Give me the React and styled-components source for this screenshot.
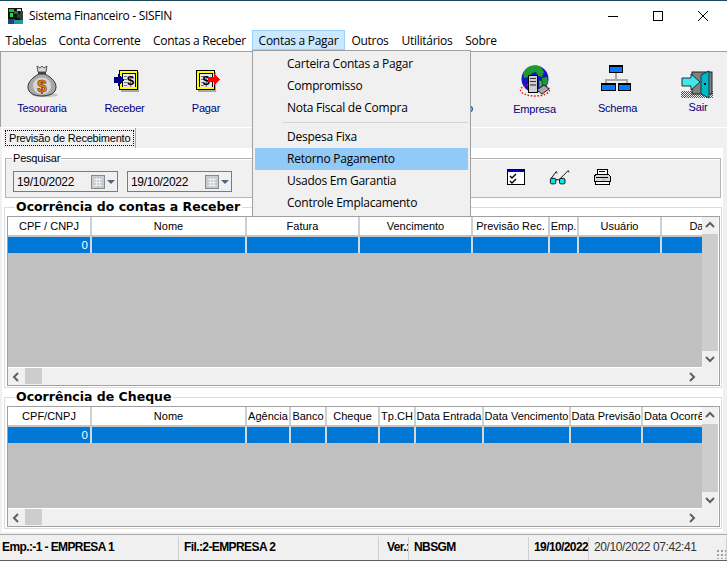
import styled, { createGlobalStyle } from "styled-components";

const GlobalStyle = createGlobalStyle`
	html, body {
		margin: 0;
		padding: 0;
		background: #f0f0f0;
	}
	* {
		box-sizing: border-box;
	}
`;

const uiFont = `"Open Sans", "Noto Sans", sans-serif`;
const oldFont = `"Liberation Sans", Arial, sans-serif`;

const menus = [
	["Tabelas", 52],
	["Conta Corrente", 95],
	["Contas a Receber", 105],
	["Contas a Pagar", 93],
	["Outros", 50],
	["Utilitários", 64],
	["Sobre", 44],
];

const receberCols = [
	["CPF / CNPJ", 84],
	["Nome", 155],
	["Fatura", 113],
	["Vencimento", 113],
	["Previsão Rec.", 77],
	["Emp.", 29],
	["Usuário", 83],
	["Data", 80],
];

const chequeCols = [
	["CPF/CNPJ", 84],
	["Nome", 155],
	["Agência", 44],
	["Banco", 36],
	["Cheque", 53],
	["Tp.CH", 36],
	["Data Entrada", 68],
	["Data Vencimento", 87],
	["Data Previsão", 72],
	["Data Ocorrência", 84],
];

const AppIcon = () => (
	<svg width="16" height="16" viewBox="0 0 16 16" shapeRendering="crispEdges">
		<rect x="0" y="0" width="14" height="12" fill="#101010" />
		<rect x="1" y="1" width="5" height="3" fill="#19c337" />
		<rect x="6" y="3" width="4" height="3" fill="#0d7a20" />
		<rect x="2" y="5" width="3" height="4" fill="#1be04a" />
		<rect x="9" y="1" width="4" height="2" fill="#d8d8d8" />
		<rect x="9" y="6" width="4" height="4" fill="#0a5a18" />
		<rect x="0" y="11" width="7" height="5" fill="#1d3f8f" />
		<rect x="6" y="12" width="9" height="4" fill="#1c9b9b" />
		<rect x="12" y="3" width="3" height="9" fill="#3a3a3a" />
	</svg>
);

const BagIcon = () => (
	<svg width="36" height="36" viewBox="0 0 36 36">
		<ellipse cx="21" cy="31" rx="13" ry="2" fill="#c4c8b4" />
		<path d="M13 2l3 2 2-2 2 2 3-2-1 6h-8z" fill="#d8d8d8" stroke="#555" strokeWidth="1" />
		<rect x="14" y="8" width="8" height="2" fill="#444" />
		<path d="M15 10C7 14 4 19 4 23c0 6 6 9 14 9s14-3 14-9c0-4-3-9-11-13z" fill="#a8a8a8" stroke="#333" strokeWidth="1" />
		<ellipse cx="18" cy="22" rx="9" ry="8.5" fill="#d4d8d2" />
		<text x="18" y="28" textAnchor="middle" fontFamily="Liberation Sans" fontWeight="700" fontSize="17" fill="#d89a00" stroke="#902000" strokeWidth="0.6">$</text>
	</svg>
);

const BillFrame = ({ x }) => (
	<g shapeRendering="crispEdges">
		<rect x={x + 2} y="8" width="18" height="20" fill="#a8a8a8" />
		<rect x={x} y="6" width="19" height="20" fill="#000" />
		<rect x={x + 1} y="7" width="17" height="18" fill="#ffff00" />
		<rect x={x + 3} y="9" width="14" height="14" fill="#000" />
		<rect x={x + 4} y="10" width="12" height="13" fill="#e8e8e8" />
		<rect x={x + 5} y="12" width="3" height="1" fill="#777" />
		<rect x={x + 5} y="15" width="3" height="1" fill="#777" />
		<rect x={x + 5} y="18" width="3" height="1" fill="#777" />
		<rect x={x + 5} y="21" width="3" height="1" fill="#777" />
	</g>
);

const ReceberIcon = () => (
	<svg width="36" height="36" viewBox="0 0 36 36">
		<BillFrame x={12} />
		<text x="23.5" y="21" textAnchor="middle" fontFamily="Liberation Sans" fontWeight="700" fontSize="13" fill="#000">$</text>
		<path d="M7 13h4v-3l6 6-6 6v-3H7z" fill="#000080" shapeRendering="crispEdges" />
	</svg>
);

const PagarIcon = () => (
	<svg width="36" height="36" viewBox="0 0 36 36">
		<BillFrame x={8} />
		<text x="18" y="21" textAnchor="middle" fontFamily="Liberation Sans" fontWeight="700" fontSize="13" fill="#000">$</text>
		<path d="M20 13h6v-4l6 6.5-6 6.5v-4h-6z" fill="#ff0000" shapeRendering="crispEdges" />
	</svg>
);

const GlobeIcon = () => (
	<svg width="36" height="36" viewBox="0 0 36 36">
		<circle cx="18" cy="15" r="13.5" fill="#1414c8" />
		<path d="M10 4c4-3 10-3 14-1l3 5-2 5-4-1-2-4-4 1-3 4-5 1-1-5z" fill="#1f9a2c" />
		<path d="M25 14l5-1 1 5-4 6-2-4z" fill="#1f9a2c" />
		<ellipse cx="18" cy="26" rx="14.5" ry="6" fill="none" stroke="#e01010" strokeWidth="1.4" strokeDasharray="1.6 1.6" />
		<g shapeRendering="crispEdges">
			<rect x="11" y="11" width="10" height="18" fill="#000" />
			<rect x="12" y="12" width="8" height="16" fill="#d0d0d0" />
			<rect x="13" y="14" width="6" height="1" fill="#333" />
			<rect x="13" y="17" width="6" height="1" fill="#333" />
			<rect x="13" y="20" width="6" height="2" fill="#777" />
		</g>
		<path d="M20 26l7-5 5 4-7 5z" fill="#a8a8a8" stroke="#222" strokeWidth="1" />
		<path d="M22 16l3 1v5l-3 2z" fill="#39c07a" stroke="#222" strokeWidth="0.7" />
	</svg>
);

const SchemaIcon = () => (
	<svg width="36" height="36" viewBox="2 0 36 36" shapeRendering="crispEdges">
		<path d="M18 9v7M8 22v-6h21v6" fill="none" stroke="#a8a8a8" strokeWidth="2" />
		<rect x="11" y="1" width="14" height="8" fill="#000" />
		<rect x="12" y="3" width="12" height="5" fill="#0a78ff" />
		<rect x="3" y="19" width="15" height="8" fill="#000" />
		<rect x="4" y="21" width="13" height="5" fill="#0a78ff" />
		<rect x="20" y="19" width="13" height="8" fill="#000" />
		<rect x="21" y="21" width="11" height="5" fill="#0a78ff" />
	</svg>
);

const SairIcon = () => (
	<svg width="36" height="36" viewBox="1 0 36 36">
		<defs>
			<pattern id="stipple" width="2" height="2" patternUnits="userSpaceOnUse">
				<rect width="1" height="1" fill="#555" />
				<rect x="1" y="1" width="1" height="1" fill="#555" />
			</pattern>
		</defs>
		<rect x="2" y="27" width="32" height="7" fill="url(#stipple)" />
		<rect x="13" y="8" width="20" height="22" fill="#808080" stroke="#222" strokeWidth="1" />
		<path d="M22 11l8-4v27l-8-4z" fill="#00b8c8" stroke="#00404a" strokeWidth="1" />
		<rect x="25" y="19" width="2" height="2" fill="#000" />
		<path d="M3 14h9v-4l9 8-9 8v-4H3z" fill="#40e8e8" stroke="#203040" strokeWidth="1" />
	</svg>
);

const ChecklistIcon = () => (
	<svg width="20" height="18" viewBox="0 0 20 18" shapeRendering="crispEdges">
		<rect x="1.5" y="1.5" width="17" height="15" fill="#fff" stroke="#000" />
		<rect x="2" y="2" width="16" height="2" fill="#0000c0" />
		<path d="M4 8l2 2 4-4M4 13l2 2 4-4" fill="none" stroke="#000" strokeWidth="1.4" shapeRendering="auto" />
	</svg>
);

const GlassesIcon = () => (
	<svg width="21" height="18" viewBox="0 0 23 18">
		<rect x="1.5" y="10.5" width="6" height="6" rx="1.5" fill="#00e8e8" stroke="#000" />
		<rect x="11.5" y="10.5" width="6" height="6" rx="1.5" fill="#00e8e8" stroke="#000" />
		<path d="M7.5 12h4M2 11l6-8 1 2M12 11l9-9 1 2" fill="none" stroke="#000" />
	</svg>
);

const PrinterIcon = () => (
	<svg width="18" height="18" viewBox="0 0 18 18" shapeRendering="crispEdges">
		<path d="M5 1h9l1 6H4z" fill="#fff" stroke="#000" />
		<path d="M1 8l3-2h11l2 2v5H1z" fill="#d8d8d8" stroke="#000" />
		<rect x="2" y="13" width="14" height="3" fill="#fff" stroke="#000" />
		<rect x="3" y="9" width="12" height="1" fill="#000" />
		<rect x="9" y="11" width="3" height="1" fill="#e0c000" />
		<rect x="6" y="3" width="6" height="1" fill="#000" />
	</svg>
);

const CalendarIcon = () => (
	<svg width="14" height="14" viewBox="0 0 14 14" shapeRendering="crispEdges">
		<rect x="0.5" y="0.5" width="13" height="13" fill="#c8ccd0" stroke="#8a8a8a" />
		<path d="M3 4h8M3 7h8M3 10h8M5 3v8M8 3v8" stroke="#f0f0f0" />
	</svg>
);

const Chevron = ({ dir }) => {
	const paths = {
		up: "M1 6l4-4 4 4",
		down: "M1 2l4 4 4-4",
		left: "M6 1L2 5l4 4",
		right: "M2 1l4 4-4 4",
	};
	return (
		<svg width="10" height="10" viewBox="0 0 10 10">
			<path d={paths[dir]} fill="none" stroke="#606060" strokeWidth="2" />
		</svg>
	);
};

const DataGrid = ({ cols, height }) => (
	<GridFrame $height={height}>
		<GridBody>
			<HeaderRow>
				{cols.map(([name, w]) => (
					<HeaderCell key={name} $w={w}>
						{name}
					</HeaderCell>
				))}
			</HeaderRow>
			<DataRow>
				{cols.map(([name, w], i) => (
					<DataCell key={name} $w={w}>
						{i === 0 ? "0" : ""}
					</DataCell>
				))}
			</DataRow>
			<GrayFill />
		</GridBody>
		<VScroll>
			<ScrollCap>
				<Chevron dir="up" />
			</ScrollCap>
			<VThumb />
			<ScrollCap>
				<Chevron dir="down" />
			</ScrollCap>
		</VScroll>
		<HScroll>
			<ScrollCap>
				<Chevron dir="left" />
			</ScrollCap>
			<HThumb />
			<ScrollCap>
				<Chevron dir="right" />
			</ScrollCap>
		</HScroll>
	</GridFrame>
);

const DateField = () => (
	<DateBox>
		<DateText>19/10/2022</DateText>
		<CalendarIcon />
		<DropArrow />
	</DateBox>
);

const App = () => (
	<Window>
		<GlobalStyle />
		<TitleBar>
			<AppIcon />
			<TitleText>Sistema Financeiro - SISFIN</TitleText>
			<WinButtons>
				<WinButton>
					<svg width="10" height="10" viewBox="0 0 10 10"><path d="M0 5.5h10" stroke="#000" /></svg>
				</WinButton>
				<WinButton>
					<svg width="10" height="10" viewBox="0 0 10 10"><rect x="0.5" y="0.5" width="9" height="9" fill="none" stroke="#000" /></svg>
				</WinButton>
				<WinButton>
					<svg width="10" height="10" viewBox="0 0 10 10"><path d="M0 0l10 10M10 0L0 10" stroke="#000" /></svg>
				</WinButton>
			</WinButtons>
		</TitleBar>
		<MenuBar>
			{menus.map(([label, w]) => (
				<MenuItem key={label} $w={w} $open={label === "Contas a Pagar"}>
					{label}
				</MenuItem>
			))}
		</MenuBar>
		<Toolbar>
			<ToolButton $w={82} label="Tesouraria"><BagIcon /></ToolButton>
			<ToolButton $w={83} label="Receber"><ReceberIcon /></ToolButton>
			<ToolButton $w={80} label="Pagar"><PagarIcon /></ToolButton>
			<HiddenTool>o</HiddenTool>
			<ToolButton $w={83} $shift={1} label="Empresa"><GlobeIcon /></ToolButton>
			<ToolButton $w={83} label="Schema"><SchemaIcon /></ToolButton>
			<ToolButton $w={78} $shift={-1} label="Sair"><SairIcon /></ToolButton>
		</Toolbar>
		<TabRow>
			<Tab>
				<TabFocus>Previsão de Recebimento</TabFocus>
			</Tab>
		</TabRow>
		<PageBody>
			<SearchGroup>
				<SearchLegend>Pesquisar</SearchLegend>
				<SearchRow>
					<DateField />
					<DateField />
					<ActionIcons>
						<ChecklistIcon />
						<GlassesIcon />
						<PrinterIcon />
					</ActionIcons>
				</SearchRow>
			</SearchGroup>
			<Section>
				<SectionLegend>Ocorrência do contas a Receber</SectionLegend>
				<DataGrid cols={receberCols} height={170} />
			</Section>
			<Section>
				<SectionLegend>Ocorrência de Cheque</SectionLegend>
				<DataGrid cols={chequeCols} height={121} />
			</Section>
		</PageBody>
		<StatusBar>
			<StatusPanel $w={179} $pad={2} $bold>Emp.:-1 - EMPRESA 1</StatusPanel>
			<StatusPanel $w={200} $pad={5} $bold>Fil.:2-EMPRESA 2</StatusPanel>
			<StatusPanel $w={30} $pad={8} $bold>Ver.:</StatusPanel>
			<StatusPanel $w={120} $pad={5} $bold>NBSGM</StatusPanel>
			<StatusPanel $w={60} $pad={5} $bold>19/10/2022</StatusPanel>
			<StatusPanel $w={138} $pad={5}>20/10/2022 07:42:41</StatusPanel>
			<Grip />
		</StatusBar>
		<Dropdown>
			<DropItem>Carteira Contas a Pagar</DropItem>
			<DropItem>Compromisso</DropItem>
			<DropItem>Nota Fiscal de Compra</DropItem>
			<DropSeparator />
			<DropItem>Despesa Fixa</DropItem>
			<DropItem $active>Retorno Pagamento</DropItem>
			<DropItem>Usados Em Garantia</DropItem>
			<DropItem>Controle Emplacamento</DropItem>
		</Dropdown>
	</Window>
);

export default App;

function ToolButton({ $w, $shift, label, children }) {
	return (
		<ToolSlot $w={$w}>
			{children}
			<ToolLabel $shift={$shift}>{label}</ToolLabel>
		</ToolSlot>
	);
}

const Window = styled.div`
	position: relative;
	width: 727px;
	height: 561px;
	overflow: hidden;
	display: flex;
	flex-direction: column;
	background: #f0f0f0;
	border-top: 1px solid #1c4a5c;
	font-family: ${uiFont};
`;

const TitleBar = styled.div`
	height: 29px;
	flex: none;
	display: flex;
	align-items: center;
	padding-left: 8px;
	background: #fff;
`;

const TitleText = styled.span`
	margin-left: 5px;
	font-size: 12px;
	letter-spacing: -0.28px;
	color: #000;
`;

const WinButtons = styled.div`
	margin-left: auto;
	margin-right: 2px;
	display: flex;
`;

const WinButton = styled.div`
	width: 45px;
	height: 29px;
	display: flex;
	align-items: center;
	justify-content: center;
`;

const MenuBar = styled.div`
	height: 21px;
	flex: none;
	display: flex;
	background: #fff;
	border-bottom: 1px solid #fff;
`;

const MenuItem = styled.div`
	width: ${(p) => p.$w}px;
	height: 20px;
	display: flex;
	align-items: center;
	justify-content: center;
	font-size: 12px;
	letter-spacing: -0.28px;
	color: #000;
	background: ${(p) => (p.$open ? "#cce8ff" : "transparent")};
	border: 1px solid ${(p) => (p.$open ? "#99d1ff" : "transparent")};
`;

const Toolbar = styled.div`
	height: 76px;
	flex: none;
	display: flex;
	padding-top: 12px;
	background: #f0f0f0;
	border-top: 1px solid #a0a0a0;
	border-left: 1px solid #a0a0a0;
`;

const ToolSlot = styled.div`
	width: ${(p) => p.$w}px;
	flex: none;
	display: flex;
	flex-direction: column;
	align-items: center;
	svg {
		flex: none;
	}
`;

const ToolLabel = styled.span`
	margin-top: ${(p) => 1 + (p.$shift || 0)}px;
	font-family: ${oldFont};
	font-size: 11px;
	letter-spacing: -0.2px;
	line-height: 15px;
	color: #000080;
`;

const HiddenTool = styled.div`
	width: 227px;
	margin-right: 20px;
	flex: none;
	padding-top: 37px;
	text-align: right;
	font-family: ${oldFont};
	font-size: 11px;
	line-height: 15px;
	color: #000080;
`;

const TabRow = styled.div`
	height: 21px;
	flex: none;
	padding-left: 2px;
	background: #f0f0f0;
	border-top: 1px solid #fff;
`;

const Tab = styled.div`
	width: 134px;
	height: 20px;
	padding: 2px 1px 1px 2px;
	background: #f0f0f0;
	border-left: 1px solid #fff;
	border-right: 1px solid #a8a8a8;
`;

const TabFocus = styled.div`
	height: 16px;
	border: 1px dotted #000;
	font-family: ${oldFont};
	font-size: 11px;
	letter-spacing: -0.2px;
	line-height: 14px;
	padding-left: 3px;
	white-space: nowrap;
	color: #000;
`;

const PageBody = styled.div`
	height: 384px;
	flex: none;
	width: 721px;
	margin-left: 2px;
	padding: 3px 1px 0 2px;
	background: #fff;
	border-top: 1px solid #fff;
`;

const SearchGroup = styled.fieldset`
	margin: 0 0 0 1px;
	padding: 0 7px;
	width: 716px;
	height: 46px;
	background: linear-gradient(#fff 0, #fff 1px, #f0f0f0 1px);
	border: 1px solid #b4b4b4;
`;

const SearchLegend = styled.legend`
	margin-left: -1px;
	padding: 0 1px;
	font-family: ${oldFont};
	font-size: 11px;
	letter-spacing: -0.2px;
	line-height: 13px;
	color: #000;
`;

const SearchRow = styled.div`
	display: flex;
	gap: 9px;
	margin-top: 6px;
`;

const DateBox = styled.div`
	width: 105px;
	height: 21px;
	display: flex;
	align-items: center;
	padding-left: 3px;
	background: #f0f0f0;
	border: 1px solid #7a7a7a;
`;

const DateText = styled.span`
	width: 74px;
	font-family: ${oldFont};
	font-size: 12px;
	letter-spacing: -0.3px;
	color: #000;
`;

const DropArrow = styled.span`
	margin-left: 2px;
	width: 0;
	height: 0;
	border-left: 4px solid transparent;
	border-right: 4px solid transparent;
	border-top: 4px solid #4a6a8a;
`;

const ActionIcons = styled.div`
	margin-left: 265px;
	display: flex;
	align-items: center;
	gap: 23px;
	margin-top: -10px;
`;

const Section = styled.fieldset`
	margin: 0;
	padding: 0 1px 1px 2px;
	width: 718px;
	background: #fff;
	border: 1px solid #dcdcdc;
`;

const SectionLegend = styled.legend`
	margin-left: 8px;
	padding: 0 2px 0 1px;
	font-family: "DejaVu Sans", sans-serif;
	font-weight: 700;
	font-size: 12.5px;
	line-height: 18px;
	color: #000;
`;

const GridFrame = styled.div`
	height: ${(p) => p.$height}px;
	display: grid;
	grid-template-columns: 694px 16px;
	grid-template-rows: 1fr 17px;
	background: #fff;
	border: 1px solid #a0a0a0;
	font-family: ${oldFont};
`;

const GridBody = styled.div`
	min-width: 0;
	overflow: hidden;
	display: flex;
	flex-direction: column;
`;

const HeaderRow = styled.div`
	height: 20px;
	flex: none;
	display: flex;
	background: #fff;
	border-bottom: 2px solid #c4c4c4;
`;

const HeaderCell = styled.div`
	width: ${(p) => p.$w}px;
	flex: none;
	overflow: hidden;
	white-space: nowrap;
	text-align: center;
	font-size: 11px;
	line-height: 18px;
	color: #000;
	border-right: 2px solid #cfcfcf;
`;

const DataRow = styled.div`
	height: 16px;
	flex: none;
	display: flex;
	background: #0078d7;
`;

const DataCell = styled.div`
	width: ${(p) => p.$w}px;
	flex: none;
	padding-right: 2px;
	text-align: right;
	font-size: 11.5px;
	line-height: 16px;
	color: #fff;
	border-right: 2px solid #d8d8d8;
`;

const GrayFill = styled.div`
	flex: 1;
	margin-bottom: 1px;
	background: #c0c0c0;
`;

const VScroll = styled.div`
	display: flex;
	flex-direction: column;
	background: #f0f0f0;
`;

const ScrollCap = styled.div`
	flex: none;
	width: 17px;
	height: 17px;
	display: flex;
	align-items: center;
	justify-content: center;
	background: #f0f0f0;
	${VScroll} & {
		width: 16px;
	}
`;

const VThumb = styled.div`
	flex: 1;
	background: #cdcdcd;
`;

const HScroll = styled.div`
	grid-column: 1 / 3;
	display: flex;
	padding-left: 0;
	background: #f0f0f0;
	& > :last-child {
		margin-left: auto;
		margin-right: 17px;
	}
`;

const HThumb = styled.div`
	width: 17px;
	height: 16px;
	background: #cdcdcd;
`;

const StatusBar = styled.div`
	position: relative;
	margin-top: auto;
	height: 27px;
	flex: none;
	display: flex;
	padding-top: 2px;
	background: #f0f0f0;
	border-top: 1px solid #a8a8a8;
	border-bottom: 1px solid #606060;
	font-family: ${oldFont};
`;

const StatusPanel = styled.div`
	width: ${(p) => p.$w}px;
	flex: none;
	overflow: hidden;
	white-space: nowrap;
	padding-left: ${(p) => p.$pad}px;
	font-size: 12px;
	line-height: 21px;
	font-weight: ${(p) => (p.$bold ? 700 : 400)};
	letter-spacing: ${(p) => (p.$bold ? "-0.6px" : "-0.4px")};
	color: ${(p) => (p.$bold ? "#000" : "#333")};
	border-right: 1px solid #d0d0d0;
`;

const Grip = styled.div`
	position: absolute;
	right: 1px;
	bottom: 1px;
	width: 10px;
	height: 10px;
	background-image: radial-gradient(#a0a0a0 1px, transparent 1px);
	background-size: 4px 4px;
`;

const Dropdown = styled.div`
	position: absolute;
	left: 252px;
	top: 49px;
	width: 219px;
	height: 167px;
	padding: 2px;
	background: #f0f0f0;
	border: 1px solid #a0a0a0;
`;

const DropItem = styled.div`
	width: 213px;
	height: 22px;
	padding: 0 0 2px 32px;
	display: flex;
	align-items: center;
	font-size: 12px;
	letter-spacing: -0.25px;
	color: #000;
	background: ${(p) => (p.$active ? "#91c9f7" : "transparent")};
`;

const DropSeparator = styled.div`
	height: 1px;
	margin: 3px 0 3px 28px;
	background: #d4d4d4;
`;
